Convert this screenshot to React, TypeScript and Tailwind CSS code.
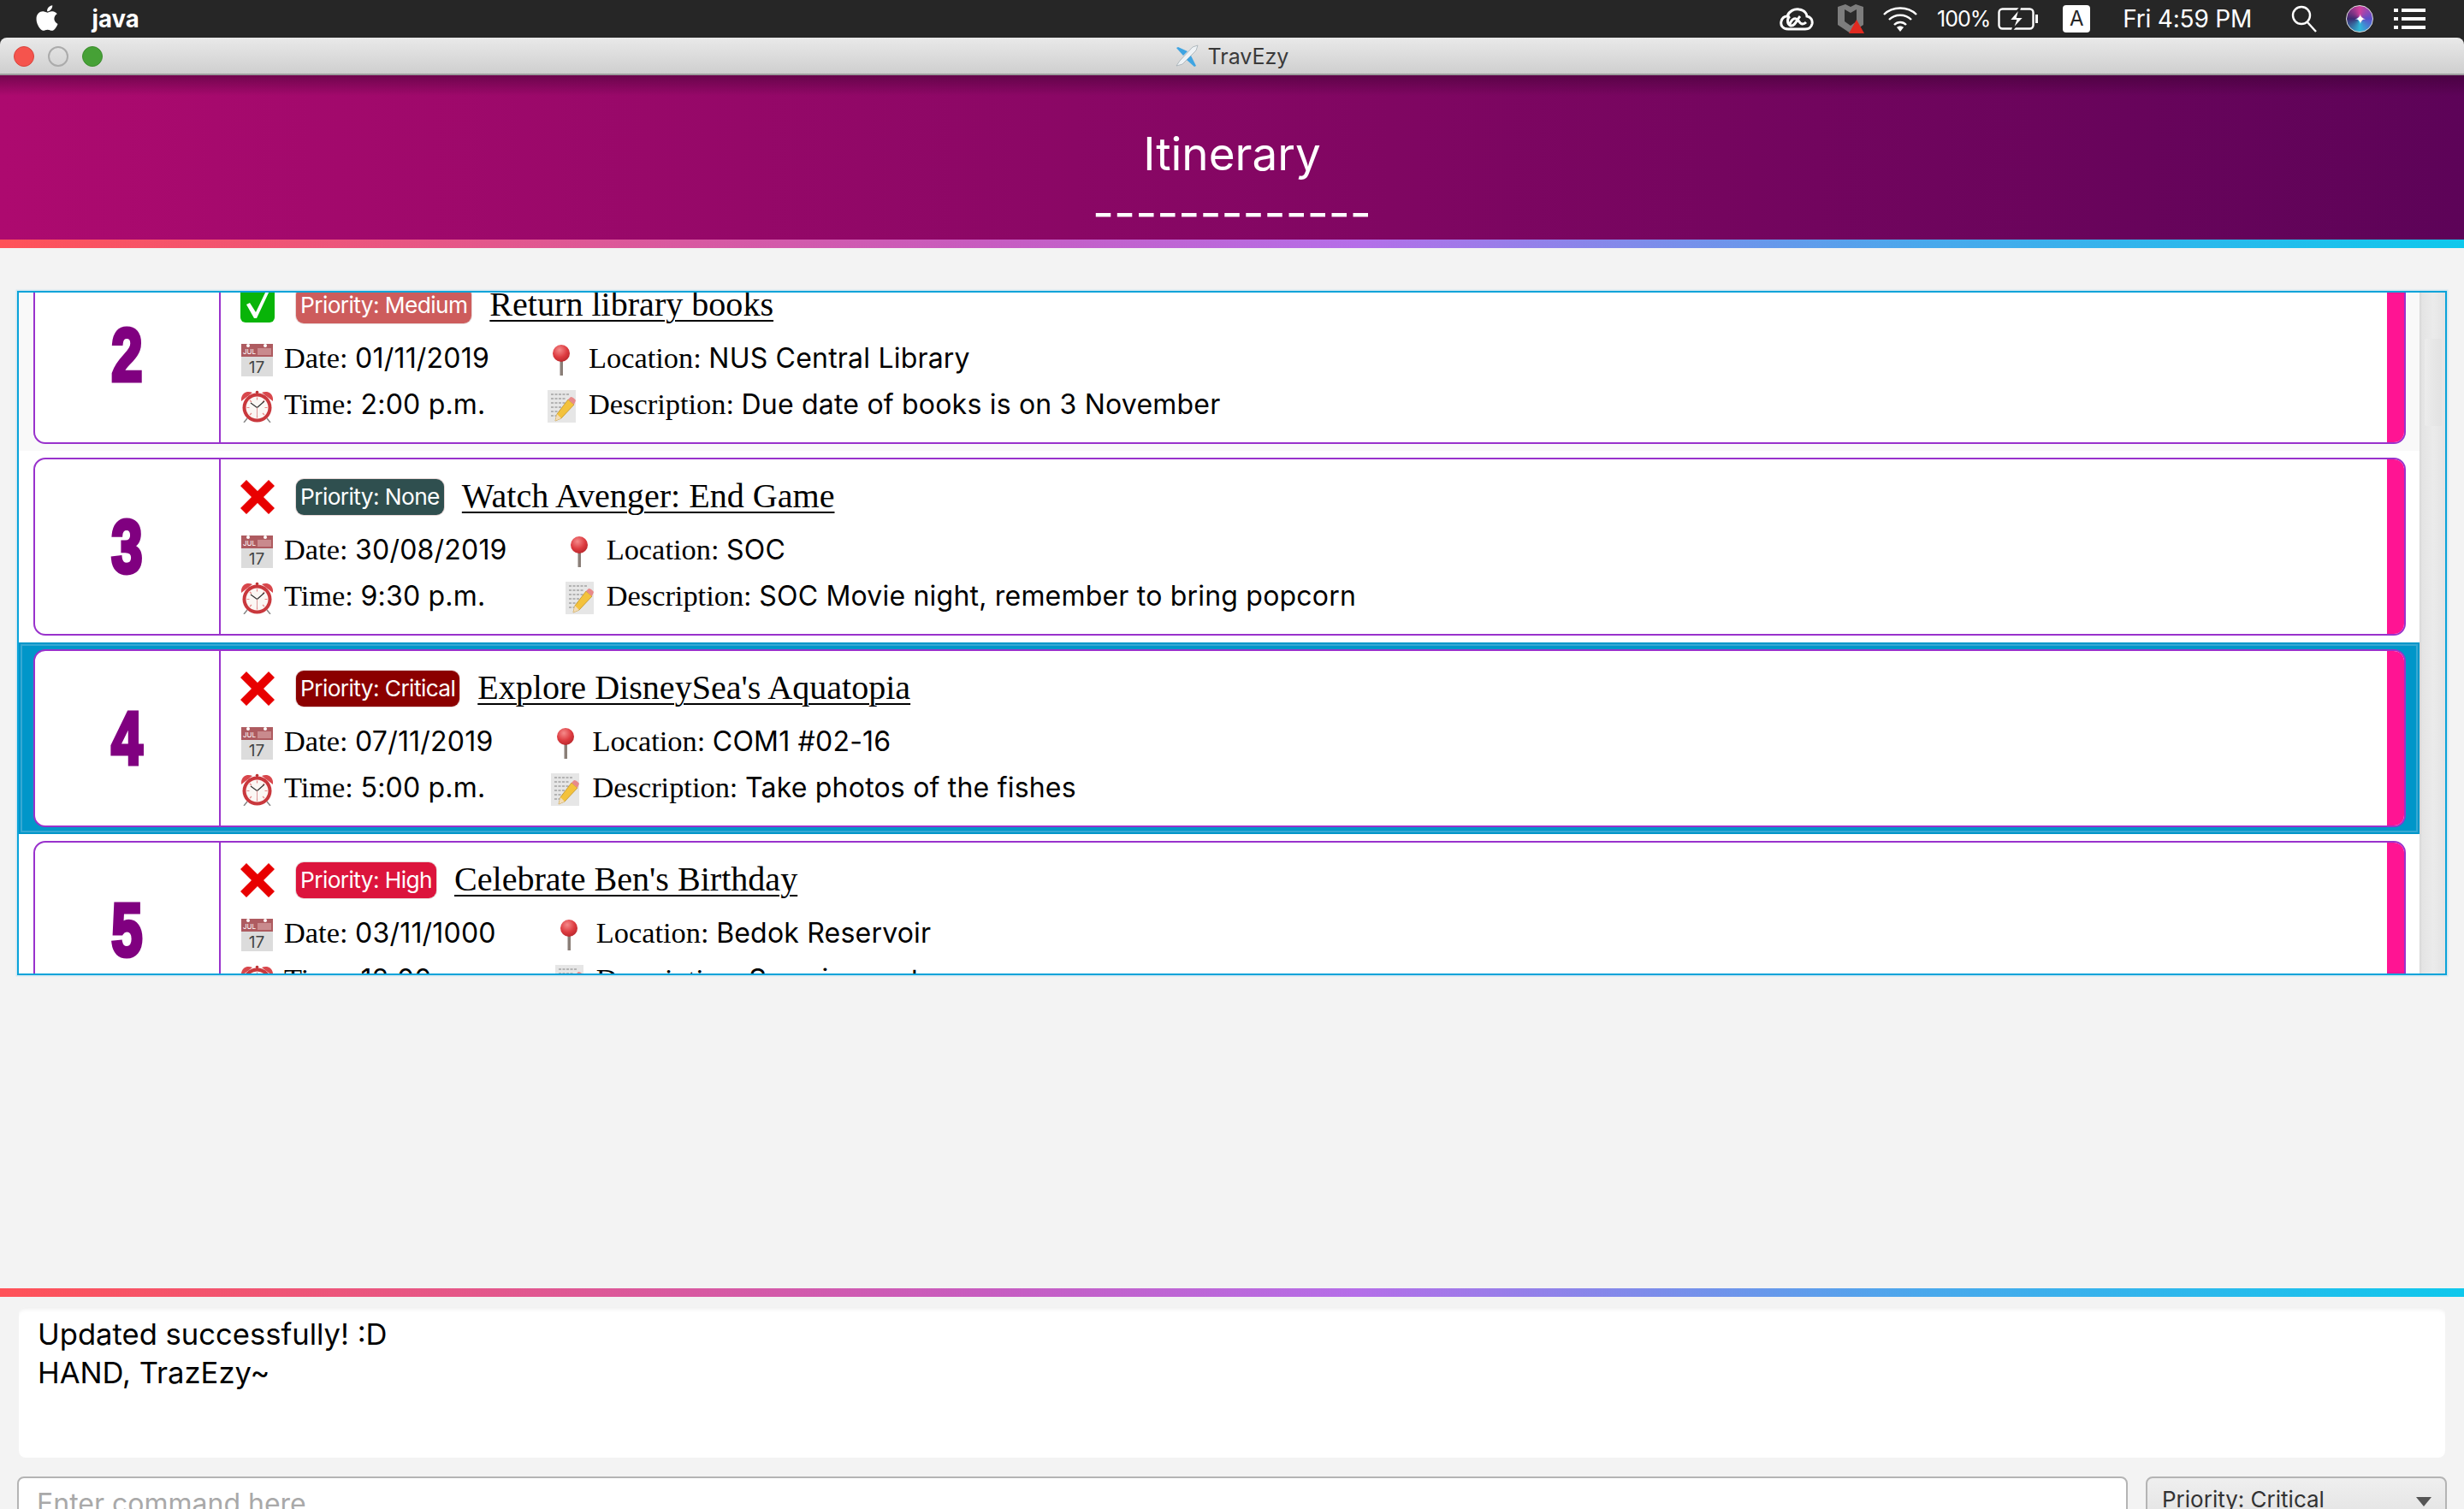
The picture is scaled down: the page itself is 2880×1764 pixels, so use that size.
import React from "react";
import { FaApple } from "react-icons/fa";

const Cal = () => (
  <svg width="37" height="38" viewBox="0 0 37 38" className="shrink-0">
    <rect x="0" y="0" width="37" height="38" fill="#dcdcdc" />
    <rect x="0" y="0" width="37" height="15" fill="#ae5b60" />
    <rect x="19" y="5" width="16" height="8" fill="#c98a8d" />
    <circle cx="8" cy="2" r="2" fill="#fff" />
    <circle cx="28" cy="2" r="2" fill="#fff" />
    <text x="2" y="12" fontSize="8" fill="#fff" fontFamily="Inter">JUL</text>
    <text x="18" y="34" fontSize="19" fill="#444" textAnchor="middle" fontFamily="Inter">17</text>
  </svg>
);

const Clock = () => (
  <svg width="37" height="38" viewBox="0 0 37 38" className="shrink-0">
    <path d="M7 33 L3 38 M30 33 L34 38" stroke="#888" strokeWidth="1.5" />
    <path d="M0 13 C-1 3 7 0 13 3 Z" fill="#d8474c" />
    <path d="M37 13 C38 3 30 0 24 3 Z" fill="#d8474c" />
    <circle cx="18.5" cy="2.5" r="1.8" fill="#b33" />
    <circle cx="18.5" cy="20.5" r="17" fill="#c9383d" />
    <circle cx="18.5" cy="20.5" r="13" fill="#fbf7f4" />
    <g stroke="#e58a8a" strokeWidth="1.2">
      <path d="M18.5 8.5v3M18.5 29.5v3M6.5 20.5h3M27.5 20.5h3M10 12l2 2M27 12l-2 2M10 29l2-2M27 29l-2-2" />
    </g>
    <path d="M18.5 20.5 L11 15 M18.5 20.5 L27 13" stroke="#333" strokeWidth="1.2" fill="none" />
    <path d="M18.5 20.5 V31" stroke="#d99" strokeWidth="1" />
  </svg>
);

const Pin = () => (
  <svg width="22" height="36" viewBox="0 0 22 36" className="shrink-0">
    <defs>
      <radialGradient id="pinred" cx="0.4" cy="0.3" r="0.8">
        <stop offset="0" stopColor="#f58a8a" />
        <stop offset="0.55" stopColor="#dd3b40" />
        <stop offset="1" stopColor="#b02328" />
      </radialGradient>
    </defs>
    <rect x="9.5" y="16" width="3.5" height="20" fill="#8a7f78" />
    <circle cx="11" cy="10" r="10" fill="url(#pinred)" />
  </svg>
);

const Note = () => (
  <svg width="33" height="38" viewBox="0 0 33 38" className="shrink-0">
    <rect x="0" y="0" width="33" height="38" fill="#e6e6e6" />
    <g stroke="#777" strokeWidth="0.9">
      <path d="M4 5h22M4 10h18M4 15h19M4 20h12M4 25h10M4 30h6" strokeDasharray="3 1.5" />
    </g>
    <path d="M24 11 L31 17 L16 33 L9 36 L11 28 Z" fill="#f3c23c" stroke="#b98a1f" strokeWidth="0.7" />
    <path d="M24 11 L27 8 Q30 8 33 12 L31 17 Z" fill="#e88a8a" />
    <path d="M11 28 L16 33 L9 36 Z" fill="#f2dcb8" />
  </svg>
);

const Cross = () => (
  <svg width="40" height="40" viewBox="0 0 40 40" className="shrink-0 -ml-[1px]">
    <path d="M0 7 L7 0 L20 13 L33 0 L40 7 L27 20 L40 33 L33 40 L20 27 L7 40 L0 33 L13 20 Z" fill="#e80000" />
  </svg>
);

const Check = () => (
  <svg width="40" height="40" viewBox="0 0 40 40" className="shrink-0 -ml-[1px]">
    <rect width="40" height="40" rx="6" fill="#08b408" />
    <path d="M7 19 L11 17 L18 28 L30 3 L34 3 L19 35 L16 35 Z" fill="#fff" />
  </svg>
);

const Plane = () => (
  <svg width="28" height="28" viewBox="0 0 28 28" className="shrink-0">
    <path d="M26 2 L20 4 L5 20 L1 26 L8 24 L24 8 Z" fill="#eef2f5" stroke="#9aa6ad" strokeWidth="0.7" />
    <path d="M14 9 L3 4 L1 5 L9 14 Z" fill="#3ea4e2" />
    <path d="M18 14 L24 26 L22 27 L13 19 Z" fill="#3ea4e2" />
  </svg>
);

type RowProps = {
  n: string;
  done?: boolean;
  badge: string;
  badgeClass: string;
  title: string;
  date: string;
  loc: string;
  time: string;
  desc: string;
  rowClass: string;
};

const Field = ({ label, value }: { label: string; value: string }) => (
  <span className="whitespace-nowrap pb-[1px]">
    <span className="font-['Liberation_Serif',serif] text-[34.4px]">{label} </span>
    <span className="font-['Inter',sans-serif] text-[32px] tracking-[0.2px]">{value}</span>
  </span>
);

const Row = ({ n, done, badge, badgeClass, title, date, loc, time, desc, rowClass }: RowProps) => (
  <div className={`h-[224px] pt-[8px] pl-[17px] pr-[16px] shrink-0 ${rowClass}`}>
    <div className="h-[208px] flex border-2 border-[#9932cc] rounded-[14px] overflow-hidden bg-white">
      <div className="w-[217px] border-r-2 border-[#9932cc] flex items-center justify-center shrink-0">
        <span className="font-['Liberation_Sans',sans-serif] font-bold text-[88px] leading-none text-[#800080] scale-x-[0.74] [-webkit-text-stroke:5px_#800080]">
          {n}
        </span>
      </div>
      <div className="flex-1 pl-[24px] pt-[23px] min-w-0 text-black">
        <div className="flex items-center h-[42px]">
          {done ? <Check /> : <Cross />}
          <span className={`ml-[25px] h-[42px] px-[5px] flex items-center rounded-[9px] text-white text-[26.3px] tracking-[-0.6px] font-['Inter',sans-serif] shadow-[0_0_0_1px_#e8d8d8] ${badgeClass}`}>
            {badge}
          </span>
          <span className="ml-[21px] pb-[2px] font-['Liberation_Serif',serif] text-[40.1px] leading-[42px] underline decoration-2 underline-offset-[5px]">
            {title}
          </span>
        </div>
        <div className="mt-[24px] grid grid-cols-[auto_auto] justify-start gap-x-[68px] gap-y-[16px] leading-[38px]">
          <div className="flex items-center gap-[13px] h-[38px]">
            <Cal />
            <Field label="Date:" value={date} />
          </div>
          <div className="flex items-center gap-[15px] h-[38px]">
            <span className="w-[33px] flex justify-center"><Pin /></span>
            <Field label="Location:" value={loc} />
          </div>
          <div className="flex items-center gap-[13px] h-[38px]">
            <Clock />
            <Field label="Time:" value={time} />
          </div>
          <div className="flex items-center gap-[15px] h-[38px]">
            <Note />
            <Field label="Description:" value={desc} />
          </div>
        </div>
      </div>
      <div className="w-[20px] bg-[#ff1493] shrink-0" />
    </div>
  </div>
);

const MenuBar = () => (
  <div className="h-[44px] bg-[#262626] flex items-center text-white shrink-0 font-['Inter',sans-serif]">
    <FaApple className="ml-[38px] text-[34px] -mt-[3px]" />
    <span className="ml-[34px] text-[29px] font-bold leading-none scale-x-[0.95] -mt-[2px]">java</span>
    <div className="ml-auto flex items-center h-full">
      <svg width="40" height="28" viewBox="0 0 40 28" fill="none" stroke="#fff" strokeWidth="3">
        <path d="M10 26 C3 26 1 21 2 17 C3 13 6 11 9 11 C11 5 17 2 23 3 C30 4 32 9 32 11 C36 12 39 15 38 20 C37 24 34 26 30 26 Z" />
        <path d="M12 20 C15 13 19 12 22 16 C25 21 28 21 31 18 M12 11 C9 13 8 20 13 22 C18 23 21 14 24 11" />
      </svg>
      <svg width="32" height="34" viewBox="0 0 32 34" className="ml-[27px]">
        <path d="M1 3 L10 0 L16 3 L22 0 L31 3 V24 L16 34 L1 24 Z" fill="#7d7d7d" />
        <path d="M9 6 L16 10 L23 6 V20 L16 25 L9 20 Z" fill="#2b2b2b" />
        <path d="M23 18 L32 34 H14 Z" fill="#e02a20" />
      </svg>
      <svg width="42" height="30" viewBox="0 0 42 30" fill="none" stroke="#fff" strokeWidth="2.4" className="ml-[21px]">
        <path d="M2 10 C12 0 30 0 40 10" />
        <path d="M8 16 C15 9 27 9 34 16" />
        <path d="M14 22 C18 18 24 18 28 22" />
        <path d="M17 25 L21 30 L25 25 C23 23 19 23 17 25 Z" fill="#fff" stroke="none" />
      </svg>
      <span className="ml-[22px] text-[25px] tracking-[-1px] leading-none">100%</span>
      <svg width="48" height="26" viewBox="0 0 48 26" className="ml-[9px]" fill="none">
        <rect x="1.5" y="1.5" width="40" height="23" rx="4" stroke="#fff" strokeWidth="2.4" />
        <rect x="44" y="8" width="3" height="10" fill="#fff" />
        <path d="M26 0 L13 15 H21 L17 26 L31 11 H23 Z" fill="#fff" stroke="#262626" strokeWidth="2" />
      </svg>
      <span className="ml-[28px] w-[32px] h-[32px] bg-white rounded-[4px] text-[#262626] text-[24px] flex items-center justify-center leading-none">A</span>
      <span className="ml-[38px] text-[28px] tracking-[-0.2px] leading-none whitespace-nowrap">Fri 4:59 PM</span>
      <svg width="30" height="32" viewBox="0 0 30 32" fill="none" stroke="#fff" strokeWidth="2.4" className="ml-[46px]">
        <circle cx="12" cy="12" r="10" />
        <path d="M19 20 L29 31" />
      </svg>
      <span className="ml-[34px] w-[32px] h-[32px] rounded-full border border-[#ddd] bg-[conic-gradient(#d0409c,#5b4fc9,#2fb8d8,#3c2a70,#d0409c)] flex items-center justify-center text-white text-[16px] leading-none">✦</span>
      <svg width="37" height="26" viewBox="0 0 37 26" fill="#fff" className="ml-[24px] mr-[45px]">
        <rect x="0" y="1" width="5" height="4" />
        <rect x="9" y="1" width="28" height="4" />
        <rect x="0" y="11" width="5" height="4" />
        <rect x="9" y="11" width="28" height="4" />
        <rect x="0" y="21" width="5" height="4" />
        <rect x="9" y="21" width="28" height="4" />
      </svg>
    </div>
  </div>
);

const Rainbow = () => (
  <div className="h-[10px] shrink-0 bg-[linear-gradient(90deg,#ff5258_0%,#c75cc0_40%,#b56ee8_55%,#4aa8ec_78%,#0fc8ec_100%)]" />
);

export default function App() {
  return (
    <div className="w-[2880px] h-[1764px] overflow-hidden flex flex-col bg-[#f3f3f3] font-['Inter',sans-serif]">
      <MenuBar />
      <div className="h-[44px] shrink-0 bg-[#262626]">
        <div className="relative h-full rounded-t-[8px] bg-[linear-gradient(#e9e9e9,#cfcfcf)] border-b-2 border-[#9c9c9c] flex items-center justify-center gap-[10px]">
          <div className="absolute left-[16px] top-[10px] flex gap-[16px]">
            <span className="w-[24px] h-[24px] rounded-full bg-[#f5544d] border border-[#d8433c]" />
            <span className="w-[24px] h-[24px] rounded-full border-2 border-[#ababab]" />
            <span className="w-[24px] h-[24px] rounded-full bg-[#46a136] border border-[#3c8c2e]" />
          </div>
          <Plane />
          <span className="text-[25px] text-[#3a3a3a] leading-none pt-[2px]">TravEzy</span>
        </div>
      </div>
      <div className="h-[192px] shrink-0 bg-[linear-gradient(90deg,#ad0a6f,#5d0358)] relative flex flex-col items-center text-white pt-[57px]">
        <div className="absolute inset-x-0 top-0 h-[24px] bg-[linear-gradient(rgba(50,0,40,0.45),rgba(50,0,40,0))]" />
        <span className="text-[53px] leading-[70px]">Itinerary</span>
        <span className="text-[54.5px] leading-[66px]">-------------</span>
      </div>
      <Rainbow />
      <div className="flex-1 min-h-0 pt-[50px] pl-[20px] pr-[20px]">
        <div className="h-[800px] border-2 border-[#0aa3d9] shadow-[0_0_0_1.5px_#d3e8f1] flex overflow-hidden bg-white">
          <div className="flex-1 min-w-0 -mt-[39px] flex flex-col">
            <Row n="2" done badge="Priority: Medium" badgeClass="bg-[#cd5c5c]" title="Return library books" date="01/11/2019" loc="NUS Central Library" time="2:00 p.m." desc="Due date of books is on 3 November" rowClass="bg-[#f9f9f9]" />
            <Row n="3" badge="Priority: None" badgeClass="bg-[#2f4f4f]" title="Watch Avenger: End Game" date="30/08/2019" loc="SOC" time="9:30 p.m." desc="SOC Movie night, remember to bring popcorn" rowClass="bg-white" />
            <Row n="4" badge="Priority: Critical" badgeClass="bg-[#8b0000]" title="Explore DisneySea's Aquatopia" date="07/11/2019" loc="COM1 #02-16" time="5:00 p.m." desc="Take photos of the fishes" rowClass="bg-[#0096c9] shadow-[inset_0_0_0_2px_#0096c9,inset_0_0_0_4px_#36a8d3]" />
            <Row n="5" badge="Priority: High" badgeClass="bg-[#dc143c]" title="Celebrate Ben's Birthday" date="03/11/1000" loc="Bedok Reservoir" time="12:00 p.m." desc="Surprise party" rowClass="bg-white" />
          </div>
          <div className="w-[30px] shrink-0 bg-[linear-gradient(90deg,#d6d6d6_0px,#e4e4e4_3px,#ebebeb_16px,#e3e3e3_100%)] pl-[6px] pr-[4px] pt-[54px]">
            <div className="h-[102px] rounded-[2px] bg-[linear-gradient(90deg,#ececec,#e2e2e2)]" />
          </div>
        </div>
      </div>
      <Rainbow />
      <div className="h-[248px] shrink-0 overflow-hidden pt-[12px] pl-[20px] pr-[20px]">
        <div className="ml-[2px] mr-[2px] h-[176px] bg-white rounded-[8px] shadow-[inset_0_5px_5px_-3px_#ededed] pl-[22px] pt-[9px] text-[34.6px] leading-[44.5px] text-black">
          <div>Updated successfully! :D</div>
          <div>HAND, TrazEzy~</div>
        </div>
        <div className="mt-[22px] flex gap-[21px] items-start">
          <div className="w-[2467px] h-[80px] bg-white border-2 border-[#b4b4b4] rounded-[8px] pl-[21px] pt-[8px] text-[32px] leading-[44px] text-[#a9a9a9]">
            Enter command here
          </div>
          <div className="flex-1 h-[80px] bg-[linear-gradient(#efefef,#dcdcdc)] border-2 border-[#b4b4b4] rounded-[8px] pl-[17px] pr-[16px] pt-[3px] text-[26px] leading-[44px] text-[#333] flex">
            <span>Priority: Critical</span>
            <span className="ml-auto mt-[19px] w-0 h-0 border-l-[9px] border-r-[9px] border-t-[11px] border-l-transparent border-r-transparent border-t-[#555]" />
          </div>
        </div>
      </div>
    </div>
  );
}
